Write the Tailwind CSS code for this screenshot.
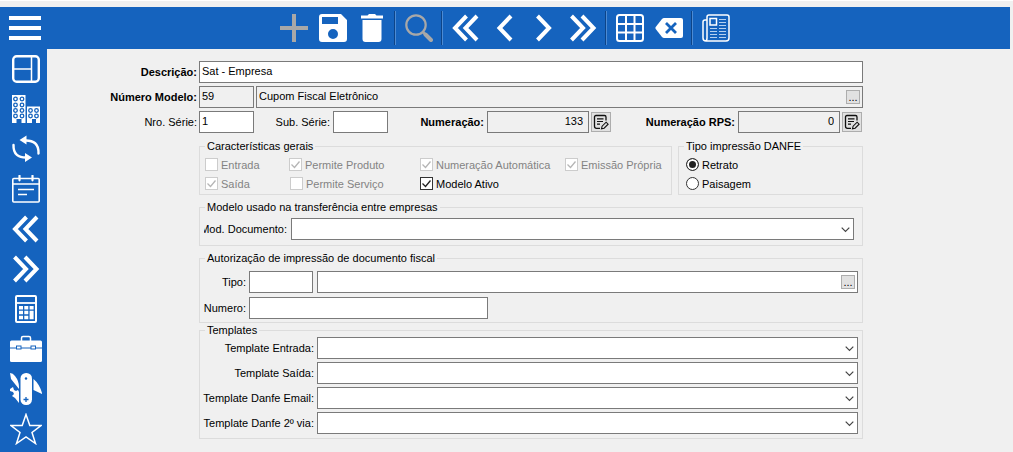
<!DOCTYPE html>
<html lang="pt-BR">
<head>
<meta charset="utf-8">
<title>Modelo de Documento</title>
<script src="https://cdn.jsdelivr.net/npm/@tailwindcss/browser@4"></script>
</head>
<body class="flex min-h-screen flex-col border-t border-white bg-[#f0f0f0] pt-[6px] font-['Liberation_Sans',Arial,sans-serif] text-[11px] leading-3 text-black">

<svg class="hidden" aria-hidden="true">
  <symbol id="dbl-left" viewBox="0 0 28 28"><path d="M14.500 2 3 14l11.500 12M25 2 13.500 14 25 26" fill="none" stroke="#fff" stroke-width="4"/></symbol>
  <symbol id="dbl-right" viewBox="0 0 28 28"><path d="M2.500 2 14 14 2.500 26M13 2 24.500 14 13 26" fill="none" stroke="#fff" stroke-width="4"/></symbol>
  <symbol id="edit-note" viewBox="0 0 16 16">
    <path d="M7 14.300H3.500Q1.500 14.300 1.500 12.300V3Q1.500 1.500 3 1.500h8.500Q13 1.500 13 3v3.500" fill="none" stroke="#111" stroke-width="1.300"/>
    <path d="M4 4.800h6.500M4 7.500h6M4 10.200h3" stroke="#111" stroke-width="1.200"/>
    <path d="m8.500 14.800.6-2.600 4-4 2 2-4 4z" fill="#e1e1e1" stroke="#111" stroke-width="1.100"/>
  </symbol>
  <symbol id="caret" viewBox="0 0 9 8"><path d="M.7 2.700 4.500 6.500 8.300 2.700" fill="none" stroke="#444" stroke-width="1.200"/></symbol>
</svg>

<header class="mr-[3px] flex h-[42px] items-center bg-[#1563be]">
  <button aria-label="Menu" class="flex w-[47px] flex-none justify-center pl-[3px]">
    <svg class="h-[26px] w-8" viewBox="0 0 32 26"><path d="M0 3h32M0 13h32M0 23h32" stroke="#fff" stroke-width="4"/></svg>
  </button>
  <nav aria-label="Ferramentas" class="flex flex-1 items-center justify-center pr-12">
    <button aria-label="Novo" class="flex w-[39px] justify-center"><svg class="size-7" viewBox="0 0 28 28"><path d="M0 14h28M14 0v28" stroke="#a8a8a8" stroke-width="4"/></svg></button>
    <button aria-label="Salvar" class="flex w-[39px] justify-center"><svg class="size-7" viewBox="0 0 28 28"><path fill="#fff" fill-rule="evenodd" d="M3 0h19l6 6v19q0 3-3 3H3q-3 0-3-3V3q0-3 3-3zM3 3v7h16V3zM14 15a5 5 0 1 0 0 10 5 5 0 0 0 0-10z"/></svg></button>
    <button aria-label="Excluir" class="flex w-[39px] justify-center"><svg class="size-7" viewBox="0 0 28 28"><path fill="#fff" d="M3 1.500h6.500L11 0h6l1.500 1.500H25v3H3zM4.500 6h19v19q0 3-3 3h-13q-3 0-3-3z"/></svg></button>
    <span class="flex w-2 justify-center"><span class="h-[34px] w-[2px] border-r border-[#4d8bd3] bg-[#0d4488]"></span></span>
    <button aria-label="Pesquisar" class="flex w-[39px] justify-center"><svg class="size-7" viewBox="0 0 28 28"><circle cx="11" cy="11" r="9.700" fill="none" stroke="#a8a8a8" stroke-width="2.200"/><path d="m18 18 3 3" stroke="#a8a8a8" stroke-width="2.500"/><path d="m20.500 20.500 5.500 5.500" stroke="#a8a8a8" stroke-width="4" stroke-linecap="round"/></svg></button>
    <span class="flex w-2 justify-center"><span class="h-[34px] w-[2px] border-r border-[#4d8bd3] bg-[#0d4488]"></span></span>
    <button aria-label="Primeiro" class="flex w-[39px] justify-center"><svg class="size-7"><use href="#dbl-left"/></svg></button>
    <button aria-label="Anterior" class="flex w-[39px] justify-center"><svg class="size-7" viewBox="0 0 28 28"><path d="M20 2 8.500 14 20 26" fill="none" stroke="#fff" stroke-width="4"/></svg></button>
    <button aria-label="Próximo" class="flex w-[39px] justify-center"><svg class="size-7" viewBox="0 0 28 28"><path d="M7.500 2 19 14 7.500 26" fill="none" stroke="#fff" stroke-width="4"/></svg></button>
    <button aria-label="Último" class="flex w-[39px] justify-center"><svg class="size-7"><use href="#dbl-right"/></svg></button>
    <span class="flex w-2 justify-center"><span class="h-[34px] w-[2px] border-r border-[#4d8bd3] bg-[#0d4488]"></span></span>
    <button aria-label="Grade" class="flex w-[39px] justify-center"><svg class="size-7" viewBox="0 0 28 28"><g fill="none" stroke="#fff" stroke-width="2"><rect x="1" y="1" width="26" height="26" rx="2.500"/><path d="M10 1v26M18.500 1v26M1 10h26M1 18.500h26"/></g></svg></button>
    <button aria-label="Limpar" class="flex w-[39px] justify-center"><svg class="size-7" viewBox="0 0 28 28"><path fill="#fff" d="M9 4h17q2 0 2 2v16q0 2-2 2H9q-1 0-2-1L.7 15q-.7-1 0-2L7 5q1-1 2-1z"/><path d="m11 9 10 10M21 9 11 19" stroke="#1563be" stroke-width="2.800"/></svg></button>
    <span class="flex w-2 justify-center"><span class="h-[34px] w-[2px] border-r border-[#4d8bd3] bg-[#0d4488]"></span></span>
    <button aria-label="Relatório" class="flex w-[39px] justify-center"><svg class="size-7" viewBox="0 0 28 28"><g fill="none" stroke="#fff" stroke-width="1.500"><path d="M5 6H3Q1 6 1 8v16q0 3 3 3h20q3 0 3-3V3q0-2-2-2H7Q5 1 5 3v21q0 3-2 3"/><rect x="8" y="4.500" width="6.500" height="6.500"/></g><path d="M17 5.500h7M17 8.500h7M17 11.500h7M8 14.500h7M17 14.500h7M8 17.500h7M17 17.500h7M8 20.500h7M17 20.500h7M8 23.500h7M17 23.500h7" stroke="#b5d0ef"/></svg></button>
  </nav>
</header>

<div class="flex flex-1">
  <nav aria-label="Módulos" class="flex w-[47px] flex-none flex-col items-center bg-[#1563be] pl-[5px]">
    <button aria-label="Painel" class="flex h-10 items-center"><svg class="size-7" viewBox="0 0 28 28"><g fill="none" stroke="#fff"><rect x="1.200" y="1.200" width="25.600" height="25.600" rx="3.500" stroke-width="2.400"/><path d="M19.500 2v24M2 14h17.500" stroke-width="1.500"/></g></svg></button>
    <button aria-label="Empresas" class="flex h-10 items-center"><svg class="size-7" viewBox="0 0 28 28"><path fill="#fff" d="M0 0h13.500v28h-4v-4h-5v4H0zM15 11.500h13V28h-4v-4h-4v4h-5z"/><g fill="#fff" stroke="#1563be" stroke-width="1.300"><circle cx="3.500" cy="4" r="1.800"/><circle cx="10" cy="4" r="1.800"/><circle cx="3.500" cy="10" r="1.800"/><circle cx="10" cy="10" r="1.800"/><circle cx="3.500" cy="15.500" r="1.800"/><circle cx="10" cy="15.500" r="1.800"/><circle cx="3.500" cy="21" r="1.800"/><circle cx="10" cy="21" r="1.800"/><circle cx="18.500" cy="15.500" r="1.800"/><circle cx="24.500" cy="15.500" r="1.800"/><circle cx="18.500" cy="21" r="1.800"/><circle cx="24.500" cy="21" r="1.800"/></g></svg></button>
    <button aria-label="Sincronizar" class="flex h-10 items-center"><svg class="size-7" viewBox="0 0 28 28"><path d="M12 5.500q15-1 14.500 13M1.500 10Q1 23.500 16 22.500" fill="none" stroke="#fff" stroke-width="2.400" stroke-linecap="round"/><path fill="#fff" d="M14.500.5v9L7.500 5zM13 18v9l7-4.500z"/></svg></button>
    <button aria-label="Agenda" class="flex h-10 items-center"><svg class="size-7" viewBox="0 0 28 28"><g fill="none" stroke="#fff" stroke-width="1.600"><rect x=".8" y="3.500" width="26.400" height="23.500" rx="1"/><path d="M1 9h26M6 14.500h16M6 19.500h9"/></g><path d="M7.500.8v4.500M20.500.8v4.500" stroke="#fff" stroke-width="2.200" stroke-linecap="round"/></svg></button>
    <button aria-label="Recuar" class="flex h-10 items-center"><svg class="size-7"><use href="#dbl-left"/></svg></button>
    <button aria-label="Avançar" class="flex h-10 items-center"><svg class="size-7"><use href="#dbl-right"/></svg></button>
    <button aria-label="Calculadora" class="flex h-10 items-center"><svg class="size-7" viewBox="0 0 28 28"><rect x="4" y="1" width="20" height="26" rx="1" fill="none" stroke="#fff" stroke-width="2"/><path d="M5 8h18" stroke="#fff" stroke-width="1.800"/><path fill="#fff" d="M7 11h4v3.500H7zM12.300 11h4v3.500h-4zM17.600 11h4v3.500h-4zM7 15.800h4v3.500H7zM12.300 15.800h4v3.500h-4zM17.600 15.800h4v8.500h-4zM7 20.700h4v3.500H7zM12.300 20.700h4v3.500h-4z"/></svg></button>
    <button aria-label="Maleta" class="flex h-10 items-center"><svg class="h-7 w-8" viewBox="0 0 32 28"><path d="M11.500 6V3q0-1.500 1.500-1.500h6q1.500 0 1.500 1.500v3" fill="none" stroke="#fff" stroke-width="1.500"/><rect y="5.500" width="32" height="21.500" rx="1.500" fill="#fff"/><path d="M0 13h32" stroke="#1563be"/><rect x="6.500" y="11" width="4.500" height="3" fill="#fff" stroke="#1563be"/><rect x="21" y="11" width="4.500" height="3" fill="#fff" stroke="#1563be"/></svg></button>
    <button aria-label="Utilitários" class="flex h-10 items-center"><svg class="size-8" viewBox="0 0 32 32"><g fill="#fff"><rect x="10.500" width="11.500" height="32" rx="5.500"/><path d="M0 0q3 0 5 3 4 5 4 11v2L1 6zM0 16l3-2 1 3 2 1 2-1 1 2v11l-4-5-3-2 2-2-1-2-3-1zM23.500 6q6 5 8.500 14v1l-8.500-4z"/></g><circle cx="16" cy="5.500" r="1.200" fill="#1563be"/><path d="M16 24v5M13.500 26.500h5" stroke="#1563be" stroke-width="1.300"/></svg></button>
    <button aria-label="Favoritos" class="flex h-10 items-center"><svg class="size-8" viewBox="0 0 32 32"><path d="m16 1.500 3.800 11H31l-9 7 3.500 11L16 24l-9.500 6.500 3.500-11-9-7h11.200z" fill="none" stroke="#fff" stroke-width="1.500"/></svg></button>
  </nav>

  <main class="min-w-0 flex-1 pt-3 pr-[150px]">
    <form class="whitespace-nowrap">
      <div class="grid grid-cols-[150px_1fr] items-center gap-x-[2px] gap-y-[3px]">
        <label for="descricao" class="text-right font-bold">Descrição:</label>
        <input id="descricao" value="Sat - Empresa" class="h-[22px] w-full border border-[#7a7a7a] bg-white px-[2px] pb-[2px]">

        <label for="modelo" class="text-right font-bold">Número Modelo:</label>
        <div class="flex gap-[2px]">
          <input id="modelo" readonly value="59" class="h-[22px] w-[55px] border border-[#7a7a7a] px-[2px] pb-[2px]">
          <div class="flex h-[22px] flex-1 items-center border border-[#7a7a7a] pr-[2px]">
            <input aria-label="Nome do modelo" readonly value="Cupom Fiscal Eletrônico" class="min-w-0 flex-1 px-[2px] pb-[2px]">
            <button type="button" class="h-[14px] w-[14px] border border-[#adadad] bg-[#e1e1e1]">...</button>
          </div>
        </div>

        <label for="serie" class="text-right">Nro. Série:</label>
        <div class="flex items-center pr-px">
          <input id="serie" value="1" class="h-[22px] w-[55px] border border-[#7a7a7a] bg-white px-[2px] pb-[2px]">
          <label for="subserie" class="w-[76px] text-right">Sub. Série:</label>
          <input id="subserie" class="ml-[3px] h-[22px] w-[55px] border border-[#7a7a7a] bg-white px-[2px]">
          <label for="numeracao" class="w-[96px] text-right font-bold">Numeração:</label>
          <input id="numeracao" readonly value="133" class="ml-[3px] h-[22px] w-[102px] border border-[#7a7a7a] pr-[5px] pb-[2px] text-right">
          <button type="button" aria-label="Editar numeração" class="ml-[2px] flex size-5 items-center justify-center border border-[#adadad] bg-[#e1e1e1]"><svg class="size-4"><use href="#edit-note"/></svg></button>
          <label for="rps" class="ml-auto text-right font-bold">Numeração RPS:</label>
          <input id="rps" readonly value="0" class="ml-[3px] h-[22px] w-[102px] border border-[#7a7a7a] pr-[5px] pb-[2px] text-right">
          <button type="button" aria-label="Editar numeração RPS" class="ml-[2px] flex size-5 items-center justify-center border border-[#adadad] bg-[#e1e1e1]"><svg class="size-4"><use href="#edit-note"/></svg></button>
        </div>
      </div>

      <div class="ml-[152px]">
        <div class="mt-[7px] flex gap-[6px]">
          <fieldset class="min-w-0 flex-1 border border-[#dcdcdc] pt-[3px] pb-px pl-[5px]">
            <legend class="px-[2px]">Características gerais</legend>
            <div class="grid grid-cols-[84px_131px_145px_auto] text-[#838383]">
              <label class="flex h-[19px] items-center gap-[3px]"><input type="checkbox" disabled class="size-[13px] appearance-none border border-[#cccccc] bg-white">Entrada</label>
              <label class="flex h-[19px] items-center gap-[3px]"><span class="grid"><input type="checkbox" checked disabled class="col-start-1 row-start-1 size-[13px] appearance-none border border-[#cccccc] bg-white"><svg class="pointer-events-none col-start-1 row-start-1 size-[13px]" viewBox="0 0 13 13"><path d="m2.500 6.500 3 3 5-6" fill="none" stroke="#b5b5b5" stroke-width="1.300"/></svg></span>Permite Produto</label>
              <label class="flex h-[19px] items-center gap-[3px]"><span class="grid"><input type="checkbox" checked disabled class="col-start-1 row-start-1 size-[13px] appearance-none border border-[#cccccc] bg-white"><svg class="pointer-events-none col-start-1 row-start-1 size-[13px]" viewBox="0 0 13 13"><path d="m2.500 6.500 3 3 5-6" fill="none" stroke="#b5b5b5" stroke-width="1.300"/></svg></span>Numeração Automática</label>
              <label class="flex h-[19px] items-center gap-[3px]"><span class="grid"><input type="checkbox" checked disabled class="col-start-1 row-start-1 size-[13px] appearance-none border border-[#cccccc] bg-white"><svg class="pointer-events-none col-start-1 row-start-1 size-[13px]" viewBox="0 0 13 13"><path d="m2.500 6.500 3 3 5-6" fill="none" stroke="#b5b5b5" stroke-width="1.300"/></svg></span>Emissão Própria</label>
              <label class="flex h-[19px] items-center gap-[3px]"><span class="grid"><input type="checkbox" checked disabled class="col-start-1 row-start-1 size-[13px] appearance-none border border-[#cccccc] bg-white"><svg class="pointer-events-none col-start-1 row-start-1 size-[13px]" viewBox="0 0 13 13"><path d="m2.500 6.500 3 3 5-6" fill="none" stroke="#b5b5b5" stroke-width="1.300"/></svg></span>Saída</label>
              <label class="flex h-[19px] items-center gap-[3px] pl-px"><input type="checkbox" disabled class="size-[13px] appearance-none border border-[#cccccc] bg-white">Permite Serviço</label>
              <label class="flex h-[19px] items-center gap-[3px] text-black"><span class="grid"><input type="checkbox" checked class="col-start-1 row-start-1 size-[13px] appearance-none border border-[#333333] bg-white"><svg class="pointer-events-none col-start-1 row-start-1 size-[13px]" viewBox="0 0 13 13"><path d="m2.500 6.500 3 3 5-6" fill="none" stroke="#222" stroke-width="1.300"/></svg></span>Modelo Ativo</label>
            </div>
          </fieldset>
          <fieldset class="w-[185px] border border-[#dcdcdc] pt-[3px] pb-px pl-[7px]">
            <legend class="-ml-[2px] px-[2px]">Tipo impressão DANFE</legend>
            <label class="flex h-[19px] items-center gap-[3px]"><input type="radio" name="danfe" checked class="size-[13px] appearance-none rounded-full border border-[#333333] bg-[#222222] ring-2 ring-white ring-inset">Retrato</label>
            <label class="flex h-[19px] items-center gap-[3px]"><input type="radio" name="danfe" class="size-[13px] appearance-none rounded-full border border-[#333333] bg-white">Paisagem</label>
          </fieldset>
        </div>

        <fieldset class="mt-[6px] border border-[#dcdcdc] py-[5px] pr-2 pl-1">
          <legend class="ml-px px-[2px]">Modelo usado na transferência entre empresas</legend>
          <div class="flex items-center gap-1">
            <label for="moddoc" class="flex w-[83px] justify-end overflow-hidden">Mod. Documento:</label>
            <span class="grid flex-1 items-center"><select id="moddoc" class="col-start-1 row-start-1 h-[22px] w-full appearance-none border border-[#7a7a7a] bg-white px-[3px]"></select><svg class="pointer-events-none col-start-1 row-start-1 mr-1 h-2 w-[9px] justify-self-end"><use href="#caret"/></svg></span>
          </div>
        </fieldset>

        <fieldset class="mt-[6px] border border-[#dcdcdc] pt-[7px] pr-1 pb-[3px] pl-[5px]">
          <legend class="px-[2px]">Autorização de impressão de documento fiscal</legend>
          <div class="grid grid-cols-[41px_1fr] items-center gap-x-[3px] gap-y-1">
            <label for="tipo" class="flex justify-end">Tipo:</label>
            <div class="flex gap-1">
              <input id="tipo" class="h-[22px] w-[64px] border border-[#7a7a7a] bg-white px-[2px]">
              <div class="flex h-[22px] flex-1 items-center border border-[#7a7a7a] bg-white pr-[2px]">
                <input aria-label="Descrição do tipo" class="min-w-0 flex-1 px-[2px]">
                <button type="button" class="h-[14px] w-[14px] border border-[#adadad] bg-[#e1e1e1]">...</button>
              </div>
            </div>
            <label for="numero" class="flex justify-end">Numero:</label>
            <input id="numero" class="h-[22px] w-[239px] border border-[#7a7a7a] bg-white px-[2px]">
          </div>
        </fieldset>

        <fieldset class="mt-px border border-[#dcdcdc] pt-px pr-1 pb-1 pl-[5px]">
          <legend class="px-[2px]">Templates</legend>
          <div class="grid grid-cols-[109px_1fr] items-center gap-x-[3px] gap-y-[3px]">
            <label for="t1" class="flex justify-end">Template Entrada:</label>
            <span class="grid items-center"><select id="t1" class="col-start-1 row-start-1 h-[22px] w-full appearance-none border border-[#7a7a7a] bg-white px-[3px]"></select><svg class="pointer-events-none col-start-1 row-start-1 mr-1 h-2 w-[9px] justify-self-end"><use href="#caret"/></svg></span>
            <label for="t2" class="flex justify-end">Template Saída:</label>
            <span class="grid items-center"><select id="t2" class="col-start-1 row-start-1 h-[22px] w-full appearance-none border border-[#7a7a7a] bg-white px-[3px]"></select><svg class="pointer-events-none col-start-1 row-start-1 mr-1 h-2 w-[9px] justify-self-end"><use href="#caret"/></svg></span>
            <label for="t3" class="flex justify-end">Template Danfe Email:</label>
            <span class="grid items-center"><select id="t3" class="col-start-1 row-start-1 h-[22px] w-full appearance-none border border-[#7a7a7a] bg-white px-[3px]"></select><svg class="pointer-events-none col-start-1 row-start-1 mr-1 h-2 w-[9px] justify-self-end"><use href="#caret"/></svg></span>
            <label for="t4" class="flex justify-end">Template Danfe 2º via:</label>
            <span class="grid items-center"><select id="t4" class="col-start-1 row-start-1 h-[22px] w-full appearance-none border border-[#7a7a7a] bg-white px-[3px]"></select><svg class="pointer-events-none col-start-1 row-start-1 mr-1 h-2 w-[9px] justify-self-end"><use href="#caret"/></svg></span>
          </div>
        </fieldset>
      </div>
    </form>
  </main>
</div>
</body>
</html>
